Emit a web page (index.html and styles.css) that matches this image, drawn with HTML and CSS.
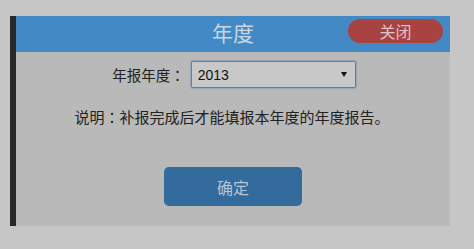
FILE: index.html
```html
<!DOCTYPE html>
<html>
<head>
<meta charset="utf-8">
<link rel="stylesheet" href="styles.css">
</head>
<body>
<div class="dialog">
  <div class="header">
    <div class="title">年度</div>
    <button class="close">关闭</button>
  </div>
  <div class="content">
    <div class="row">
      <span class="label">年报年度<span class="colon">：</span></span>
      <div class="select">
        <span class="value">2013</span>
        <span class="arrow"></span>
      </div>
    </div>
    <p class="desc">说明<span class="colon">：</span>补报完成后才能填报本年度的年度报告。</p>
    <button class="ok">确定</button>
  </div>
</div>
</body>
</html>
```
FILE: styles.css
```css
html, body {
  margin: 0;
  padding: 0;
  background: #c6c6c6;
  font-family: "Liberation Sans", "Noto Sans CJK SC", sans-serif;
}
body {
  padding: 16px 24px 0 10px;
}
.dialog {
  width: 434px;
  height: 210px;
  border-left: 6px solid #282828;
  background: #b8b9b8;
  display: flex;
  flex-direction: column;
}
.header {
  position: relative;
  height: 36px;
  background: #4289c6;
  display: flex;
  align-items: center;
  justify-content: center;
}
.title {
  font-family: "Noto Sans CJK SC", sans-serif;
  font-size: 21px;
  color: #c9d6e2;
  line-height: 36px;
  margin-top: -4px;
}
.close {
  position: absolute;
  right: 7px;
  top: 3px;
  width: 95px;
  height: 24px;
  border: none;
  border-radius: 12px;
  background: #a84341;
  color: #dcc4c4;
  font-family: "Noto Sans CJK SC", sans-serif;
  font-size: 16px;
  line-height: 24px;
  padding: 0;
}
.content {
  display: flex;
  flex-direction: column;
  align-items: center;
  padding-top: 9px;
}
.row {
  display: flex;
  align-items: center;
  height: 27px;
  gap: 6px;
  margin-left: 2px;
}
.label {
  font-family: "Noto Sans CJK SC", sans-serif;
  font-size: 14.5px;
  color: #222;
}
.colon {
  font-family: "Noto Sans CJK TC", sans-serif;
}
.select {
  box-sizing: border-box;
  width: 165px;
  height: 27px;
  border: 1px solid #5a7fb6;
  border-radius: 2px;
  background: #c8c8c8;
  box-shadow: 0 0 1px 1px rgba(90,127,182,0.35);
  display: flex;
  align-items: center;
  justify-content: space-between;
  padding: 0 8px 0 6px;
}
.value {
  font-family: "Liberation Sans", sans-serif;
  font-size: 14px;
  color: #111;
}
.arrow {
  width: 0;
  height: 0;
  border-left: 3px solid transparent;
  border-right: 3px solid transparent;
  border-top: 5px solid #111;
}
.desc {
  margin: 19px 0 0;
  line-height: 20px;
  font-family: "Noto Sans CJK SC", sans-serif;
  font-size: 15px;
  color: #222;
  margin-left: -2px;
}
.ok {
  margin-top: 40px;
  width: 138px;
  height: 39px;
  border: none;
  border-radius: 5px;
  background: #336b9c;
  color: #b6c6d6;
  font-family: "Noto Sans CJK SC", sans-serif;
  font-size: 16px;
  padding: 0;
}
```
